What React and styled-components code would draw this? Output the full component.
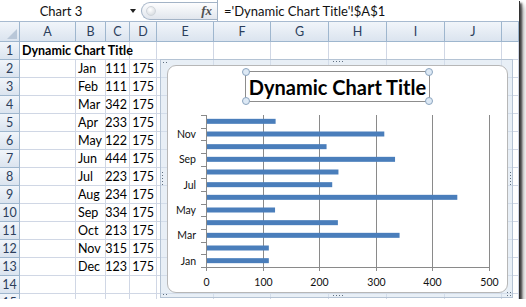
import styled, { createGlobalStyle } from 'styled-components';

const GlobalStyle = createGlobalStyle`
  body {
    margin: 0;
    background: #fff;
  }
`;

const FONT = `Lato, "Open Sans", "DejaVu Sans", sans-serif`;

const Window = styled.div`
  position: relative;
  width: 519px;
  height: 299px;
  overflow: hidden;
  background: #fff;
  font-family: ${FONT};
  box-shadow: 1px 1px 0 #333, 3px 3px 2px rgba(0, 0, 0, 0.65), 5px 6px 5px rgba(0, 0, 0, 0.3);
`;

const FormulaBar = styled.div`
  display: flex;
  align-items: center;
  height: 21px;
  border-bottom: 1px solid #a7bad0;
  background: #fff;
`;

const NameBox = styled.div`
  display: flex;
  align-items: center;
  width: 138px;
  font-size: 13px;
  color: #111;
`;

const NameText = styled.span`
  width: 122px;
  text-align: center;
`;

const DropArrow = styled.span`
  width: 0;
  height: 0;
  margin-left: 8px;
  border-left: 3.5px solid transparent;
  border-right: 3.5px solid transparent;
  border-top: 4px solid #222;
`;

const FxPill = styled.div`
  box-sizing: border-box;
  display: flex;
  align-items: center;
  justify-content: space-between;
  margin-left: 3px;
  width: 76px;
  height: 18px;
  padding: 0 5px 0 4px;
  border: 1px solid #a3b3c6;
  border-right: none;
  border-radius: 9px 0 0 9px;
  background: linear-gradient(#fdfdfe, #e1e6ed);
`;

const CircleBtn = styled.span`
  width: 8px;
  height: 8px;
  border-radius: 50%;
  border: 1px solid #d0d5db;
  background: radial-gradient(circle at 40% 35%, #fff, #cfd4da);
`;

const Fx = styled.span`
  font-family: "Liberation Serif", serif;
  font-style: italic;
  font-weight: bold;
  font-size: 13px;
  color: #505050;
`;

const FormulaInput = styled.div`
  display: flex;
  align-items: center;
  flex: 1;
  height: 21px;
  padding-left: 6px;
  border-left: 1px solid #a3b3c6;
  font-size: 13px;
  color: #111;
`;

const Sheet = styled.div`
  display: grid;
  grid-template-columns: 20px 56px 30px 24px 27px 57px 57px 58px 58px 58px 57px 1fr;
  grid-template-rows: 20px;
  grid-auto-rows: 18px;
`;

const HeadCell = styled.div`
  box-sizing: border-box;
  display: flex;
  align-items: center;
  justify-content: center;
  border-right: 1px solid #9eb6ce;
  border-bottom: 1px solid #9eb6ce;
  background: linear-gradient(#f1f5fa, #dbe4ef);
  font-size: 12.5px;
  color: #2c3e5c;
`;

const Corner = styled(HeadCell)`
  position: relative;
  &::after {
    content: '';
    position: absolute;
    right: 2px;
    bottom: 2px;
    border-left: 10px solid transparent;
    border-bottom: 10px solid #b9c7d8;
  }
`;

const Cell = styled.div`
  box-sizing: border-box;
  display: flex;
  align-items: flex-end;
  justify-content: ${(p) => (p.$align === 'right' ? 'flex-end' : 'flex-start')};
  grid-column: span ${(p) => p.$span || 1};
  padding: 0 2px 1px;
  border-right: 1px solid #d0d7e5;
  border-bottom: 1px solid #d0d7e5;
  font-size: 12.5px;
  font-weight: ${(p) => (p.$bold ? 700 : 400)};
  color: #000;
  white-space: nowrap;
`;

const ChartFrame = styled.div`
  position: absolute;
  left: 160px;
  top: 59px;
  box-sizing: border-box;
  width: 353px;
  height: 239px;
  padding: 5px 4px 4px 6px;
  border: 1px solid #b4c3d4;
  background: rgba(214, 225, 238, 0.55);
`;

const Grip = styled.span`
  position: absolute;
  width: ${(p) => p.$w}px;
  height: ${(p) => p.$h}px;
  background-image: radial-gradient(#5f6f80 0.7px, transparent 1px);
  background-size: 3px 3px;
`;

const ChartArea = styled.div`
  box-sizing: border-box;
  display: flex;
  flex-direction: column;
  align-items: center;
  height: 100%;
  border: 1px solid #b7b7b7;
  border-radius: 9px;
  background: #fff;
`;

const TitleBox = styled.div`
  position: relative;
  box-sizing: border-box;
  display: flex;
  align-items: center;
  justify-content: center;
  margin-top: 5px;
  width: 185px;
  height: 31px;
  border: 1px solid #8d8d8d;
  font-size: 20px;
  font-weight: 700;
  color: #000;
`;

const Handle = styled.span`
  position: absolute;
  width: 6px;
  height: 6px;
  border-radius: 50%;
  border: 1px solid #8ca5bf;
  background: #dde9f5;
  ${(p) => (p.$v === 'top' ? 'top: -4px;' : 'bottom: -4px;')}
  ${(p) => (p.$h === 'left' ? 'left: -4px;' : 'right: -4px;')}
`;

const Plot = styled.svg`
  display: block;
  font-family: ${FONT};
`;

const months = [
  ['Jan', 111], ['Feb', 111], ['Mar', 342], ['Apr', 233], ['May', 122], ['Jun', 444],
  ['Jul', 223], ['Aug', 234], ['Sep', 334], ['Oct', 213], ['Nov', 315], ['Dec', 123],
];

const cols = ['A', 'B', 'C', 'D', 'E', 'F', 'G', 'H', 'I', 'J', ''];

const X0 = 38;
const TOP = 13;
const BOTTOM = 165;
const UNIT = 0.566;
const BAND = (BOTTOM - TOP) / 12;

function BarChart() {
  return (
    <Plot width="339" height="190">
      {[1, 2, 3, 4, 5].map((k) => {
        const x = Math.round(X0 + k * 100 * UNIT) + 0.5;
        return <line key={k} x1={x} x2={x} y1={TOP} y2={BOTTOM} stroke="#8a8a8a" />;
      })}
      {months.map(([m, v], i) => {
        const cy = BOTTOM - (i + 0.5) * BAND;
        return (
          <rect key={m} x={X0 + 1} y={cy - 2.5} width={v * UNIT - 1} height="5" fill="#4a7ebb" />
        );
      })}
      <line x1={X0 + 0.5} x2={X0 + 0.5} y1={TOP} y2={BOTTOM} stroke="#8a8a8a" />
      <line x1={X0} x2={X0 + 500 * UNIT + 1} y1={BOTTOM + 0.5} y2={BOTTOM + 0.5} stroke="#8a8a8a" />
      {months.concat([['', 0]]).map((_, i) => {
        const y = Math.round(BOTTOM - i * BAND) + 0.5;
        return <line key={i} x1={X0 - 5} x2={X0} y1={y} y2={y} stroke="#8a8a8a" />;
      })}
      {[0, 1, 2, 3, 4, 5].map((k) => {
        const x = Math.round(X0 + k * 100 * UNIT) + 0.5;
        return (
          <g key={k}>
            <line x1={x} x2={x} y1={BOTTOM} y2={BOTTOM + 4} stroke="#8a8a8a" />
            <text x={x} y={BOTTOM + 19} fontSize="10.5" textAnchor="middle" fill="#111">
              {k * 100}
            </text>
          </g>
        );
      })}
      {months.map(([m], i) =>
        i % 2 === 0 ? (
          <text key={m} x="28" y={BOTTOM - (i + 0.5) * BAND + 4} fontSize="10.5" textAnchor="end" fill="#111">
            {m}
          </text>
        ) : null
      )}
    </Plot>
  );
}

function EmptyCells({ count }) {
  return Array.from({ length: count }, (_, i) => <Cell key={'e' + i} />);
}

export default function App() {
  return (
    <Window>
      <GlobalStyle />
      <FormulaBar>
        <NameBox>
          <NameText>Chart 3</NameText>
          <DropArrow />
        </NameBox>
        <FxPill>
          <CircleBtn />
          <Fx>fx</Fx>
        </FxPill>
        <FormulaInput>='Dynamic Chart Title'!$A$1</FormulaInput>
      </FormulaBar>

      <Sheet>
        <Corner />
        {cols.map((c, i) => (
          <HeadCell key={i}>{c}</HeadCell>
        ))}

        <HeadCell>1</HeadCell>
        <Cell $span={3} $bold>Dynamic Chart Title</Cell>
        <EmptyCells count={8} />

        {months.map(([m, v], i) => (
          <div key={m} style={{ display: 'contents' }}>
            <HeadCell>{i + 2}</HeadCell>
            <Cell />
            <Cell>{m}</Cell>
            <Cell $align="right">{v}</Cell>
            <Cell $align="right">175</Cell>
            <EmptyCells count={7} />
          </div>
        ))}

        {[14, 15].map((r) => (
          <div key={r} style={{ display: 'contents' }}>
            <HeadCell>{r}</HeadCell>
            <EmptyCells count={11} />
          </div>
        ))}
      </Sheet>

      <ChartFrame>
        <Grip $w={6} $h={4} style={{ left: 1, top: 1 }} />
        <Grip $w={12} $h={3} style={{ left: 171, top: 0 }} />
        <Grip $w={3} $h={14} style={{ left: 0, top: 111 }} />
        <Grip $w={3} $h={14} style={{ right: 0, top: 111 }} />
        <Grip $w={6} $h={4} style={{ left: 1, bottom: 0 }} />
        <Grip $w={12} $h={3} style={{ left: 171, bottom: 0 }} />
        <Grip $w={6} $h={6} style={{ right: 0, bottom: 0 }} />
        <ChartArea>
          <TitleBox>
            Dynamic Chart Title
            <Handle $v="top" $h="left" />
            <Handle $v="top" $h="right" />
            <Handle $v="bottom" $h="left" />
            <Handle $v="bottom" $h="right" />
          </TitleBox>
          <BarChart />
        </ChartArea>
      </ChartFrame>
    </Window>
  );
}
